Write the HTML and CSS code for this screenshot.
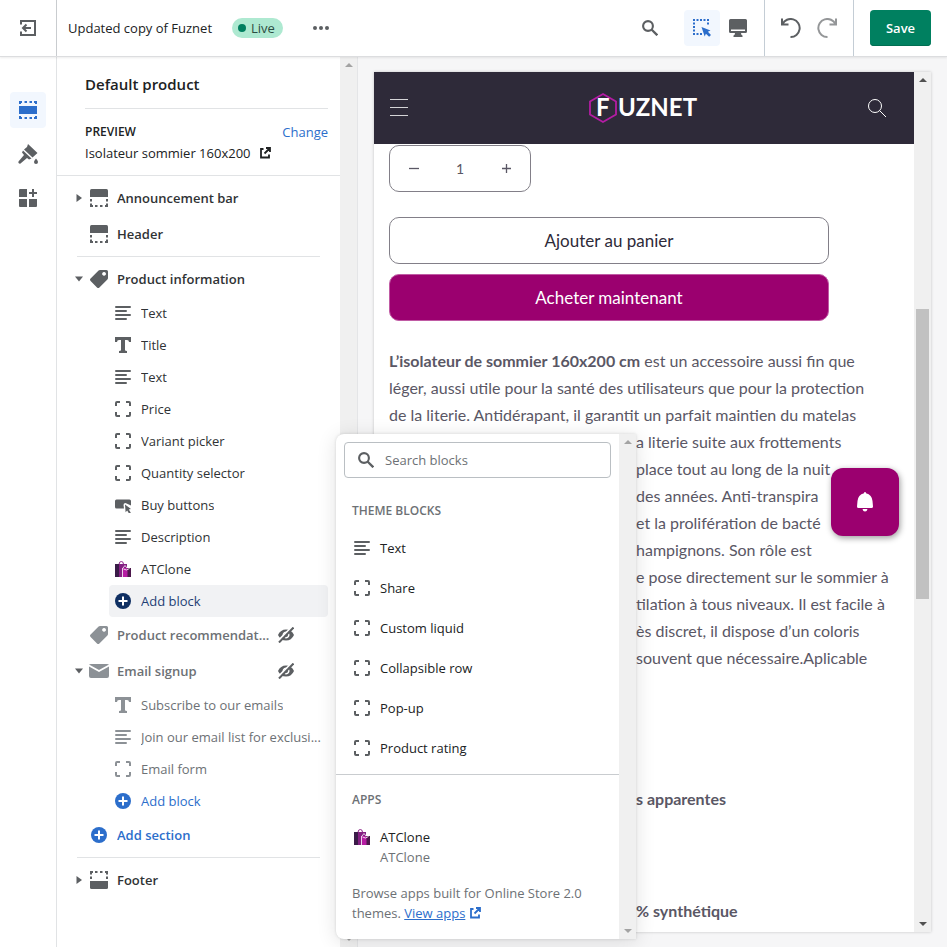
FILE: index.html
```html
<!DOCTYPE html>
<html lang="en">
<head>
<meta charset="utf-8">
<meta name="viewport" content="width=device-width, initial-scale=1">
<title>Theme editor</title>
<link rel="stylesheet" href="styles.css">
</head>
<body>
<svg class="sprite" aria-hidden="true">
  <symbol id="exit" viewBox="0 0 18 18"><path d="M2 5.500V2h14v14H2v-3.500M4 9h8M7.500 5.500 4 9l3.500 3.500" fill="none" stroke="currentColor" stroke-width="2"/></symbol>
  <symbol id="sections" viewBox="0 0 18 18"><path d="M0 5h18v8H0z" fill="currentColor"/><path d="M1 3V1h2M5.500 1h2.500M10.500 1H13M15 1h2v2M1 15v2h2M5.500 17h2.500M10.500 17H13M15 17h2v-2" fill="none" stroke="currentColor" stroke-width="2"/></symbol>
  <symbol id="brush" viewBox="0 0 20 20"><path d="m10 0 9.500 9-5 4.500L6 5.500 9 3zM5 6.500l8.500 8-2.500 1-2-1.500-6.500 5.500a1.500 1.500 0 0 1-2-2L6 11 4 8.500z" fill="currentColor"/><path d="M18 14.500s2 2.300 2 3.500a2 2 0 0 1-4 0c0-1.200 2-3.500 2-3.500z" fill="currentColor"/></symbol>
  <symbol id="apps" viewBox="0 0 18 18"><path d="M1 0h7v8H0V1q0-1 1-1zM0 10h8v8H1q-1 0-1-1zM10 10h8v7q0 1-1 1h-7zM13 0h2v3h3v2h-3v3h-2V5h-3V3h3z" fill="currentColor"/></symbol>
  <symbol id="search" viewBox="0 0 16 16"><circle cx="6" cy="6" r="4.900" fill="none" stroke="currentColor" stroke-width="2.100"/><path d="m9.500 9.500 5.800 5.800" stroke="currentColor" stroke-width="2.300"/></symbol>
  <symbol id="inspect" viewBox="0 0 18 18"><path d="M0 0h2v2H0zM3.500 0h2v2h-2zM7 0h2v2H7zM10.500 0h2v2h-2zM14 0h2v2h-2zM0 3.500h2v2H0zM0 7h2v2H0zM0 10.500h2v2H0zM0 14h2v2H0zM3.500 14h2v2h-2zM7 14h2v2H7zM14 3.500h2v2h-2z" fill="currentColor"/><path d="m8.500 8 9 3.500-2.600 1.200 3.100 3.200-1.900 1.900-3.200-3.100-1.200 2.800z" fill="currentColor"/></symbol>
  <symbol id="desktop" viewBox="0 0 18 18"><path d="M1.500 0h15Q18 0 18 1.500v11q0 1.500-1.500 1.500H12q0 2 1.500 2.500V18h-9v-1.500Q6 16 6 14H1.500Q0 14 0 12.500v-11Q0 0 1.500 0zM2 10.500V12h14v-1.500z" fill="currentColor" fill-rule="evenodd"/></symbol>
  <symbol id="undo" viewBox="0 0 20 20"><path d="M1.500 6.200A9 9 0 1 1 9.500 19M1 .500V6.500h6.500" fill="none" stroke="currentColor" stroke-width="2"/></symbol>
  <symbol id="top" viewBox="0 0 18 18"><path d="M1.500 0h15Q18 0 18 1.500V8H0V1.500Q0 0 1.500 0z" fill="currentColor"/><path d="M1 10v2.500M1 14.500V17h2M5 17h2.500M10 17h2.500M15 17h2v-2.500M17 12.500V10" fill="none" stroke="currentColor" stroke-width="2"/></symbol>
  <symbol id="tag" viewBox="0 0 18 18"><path d="M10 0h6.500Q18 0 18 1.500V8q0 .800-.600 1.400L9.400 17.400q-1.200 1.200-2.400 0L.600 11q-1.200-1.200 0-2.400L8.600.600Q9.200 0 10 0zM14 2a1.900 1.900 0 1 0 .1 0z" fill="currentColor" fill-rule="evenodd"/></symbol>
  <symbol id="text" viewBox="0 0 16 16"><path d="M1 2h14M1 6h10M1 10h14M1 14h10" stroke="currentColor" stroke-width="2" stroke-linecap="round"/></symbol>
  <symbol id="title" viewBox="0 0 16 16"><path d="M0 0h16v5h-2q0-2-2-2h-2v10q0 1 2 1v2H4v-2q2 0 2-1V3H4Q2 3 2 5H0z" fill="currentColor"/></symbol>
  <symbol id="block" viewBox="0 0 16 16"><path d="M1 5V2q0-1 1-1h3M11 1h3q1 0 1 1v3M15 11v3q0 1-1 1h-3M5 15H2q-1 0-1-1v-3" fill="none" stroke="currentColor" stroke-width="2"/></symbol>
  <symbol id="buy" viewBox="0 0 16 16"><path d="M1.500 2.500h13Q16 2.500 16 4v4.500L10.500 6Q8.500 6 8.500 8l.5 3.500H1.500Q0 11.500 0 10V4q0-1.500 1.500-1.500z" fill="currentColor"/><path d="m10 7.500 6 4.500-2.200.500 2 3.300-1.700.900-1.900-3.200-1.600 1.700z" fill="currentColor"/></symbol>
  <symbol id="bag" viewBox="0 0 16 16"><path d="M4 3.500Q4 .500 6.300.500T8.500 3.500" fill="none" stroke="#8d2589"/><path d="M0 3h7v13H0z" fill="#3a1c48"/><path d="M4 3h8v13H4z" fill="#842082"/><path d="M7.500 7H16v9H7.500z" fill="#b51ca2"/><path d="M12.500 7H16v9h-3.500z" fill="#4c184c"/><path d="M7.500 7v9M8 7l2-2.500L12 7l2.500-2L16 7M8.500 8l3 1 3-1.500" fill="none" stroke="#fff" stroke-width=".800"/></symbol>
  <symbol id="plus" viewBox="0 0 16 16"><circle cx="8" cy="8" r="8" fill="currentColor"/><path d="M8 3.500v9M3.500 8h9" stroke="#fff" stroke-width="2"/></symbol>
  <symbol id="hidden" viewBox="0 0 16 16"><path d="M0 8Q2.500 2.500 8 2.500t8 5.500q-2.500 5.500-8 5.500T0 8zM8 4.500a3.500 3.500 0 1 0 .1 0z" fill="currentColor" fill-rule="evenodd"/><circle cx="8" cy="8" r="2" fill="currentColor"/><path d="M-.5 14.500 14.500-.5" stroke="#fff" stroke-width="2"/><path d="m1 15.500 14.500-15" stroke="currentColor" stroke-width="2"/></symbol>
  <symbol id="mail" viewBox="0 0 20 14"><path d="M0 2.500 10 8l10-5.500V12q0 2-2 2H2q-2 0-2-2z" fill="currentColor"/><path d="M0 .500Q.500 0 2 0h16q1.500 0 2 .500L10 6z" fill="currentColor"/></symbol>
  <symbol id="external" viewBox="0 0 12 12"><path d="M4.500 2H2v8.500h8V7.500M7 1h4v4M11 1 5.500 6.500" fill="none" stroke="currentColor" stroke-width="1.800"/></symbol>
  <symbol id="right" viewBox="0 0 10 10"><path d="M2.500 1v8L8 5z" fill="currentColor"/></symbol>
  <symbol id="down" viewBox="0 0 10 10"><path d="M1 2.500h8L5 7.500z" fill="currentColor"/></symbol>
</svg>

<div class="app">
  <header class="topbar">
    <button class="exit" aria-label="Exit"><svg class="i18"><use href="#exit"/></svg></button>
    <div class="theme">
      <span>Updated copy of Fuznet</span>
      <span class="badge"><i></i>Live</span>
      <button class="more" aria-label="More actions"><i></i><i></i><i></i></button>
    </div>
    <div class="tools">
      <button class="tool" aria-label="Search"><svg class="i16"><use href="#search"/></svg></button>
      <button class="tool selected" aria-label="Inspector"><svg class="i18"><use href="#inspect"/></svg></button>
      <button class="tool desk" aria-label="Desktop view"><svg class="i18"><use href="#desktop"/></svg></button>
    </div>
    <div class="history">
      <button class="tool" aria-label="Undo"><svg class="i20"><use href="#undo"/></svg></button>
      <button class="tool redo" aria-label="Redo"><svg class="i20"><use href="#undo"/></svg></button>
    </div>
    <div class="saving"><button class="save">Save</button></div>
  </header>

  <div class="body">
    <nav class="rail">
      <button class="tool selected" aria-label="Sections"><svg class="i18"><use href="#sections"/></svg></button>
      <button class="tool" aria-label="Theme settings"><svg class="i20"><use href="#brush"/></svg></button>
      <button class="tool" aria-label="App embeds"><svg class="i18"><use href="#apps"/></svg></button>
    </nav>

    <aside class="sidebar">
      <div class="intro">
        <h1>Default product</h1>
        <div class="preview-head"><h2>PREVIEW</h2><a href="#change">Change</a></div>
        <p>Isolateur sommier 160x200 <svg class="i12"><use href="#external"/></svg></p>
      </div>
      <div class="tree">
        <button class="row"><svg class="caret"><use href="#right"/></svg><svg class="i18"><use href="#top"/></svg><span>Announcement bar</span></button>
        <button class="row"><i class="caret"></i><svg class="i18"><use href="#top"/></svg><span>Header</span></button>
        <hr>
        <button class="row"><svg class="caret"><use href="#down"/></svg><svg class="i18"><use href="#tag"/></svg><span>Product information</span></button>
        <button class="sub"><svg class="i16"><use href="#text"/></svg><span>Text</span></button>
        <button class="sub"><svg class="i16"><use href="#title"/></svg><span>Title</span></button>
        <button class="sub"><svg class="i16"><use href="#text"/></svg><span>Text</span></button>
        <button class="sub"><svg class="i16"><use href="#block"/></svg><span>Price</span></button>
        <button class="sub"><svg class="i16"><use href="#block"/></svg><span>Variant picker</span></button>
        <button class="sub"><svg class="i16"><use href="#block"/></svg><span>Quantity selector</span></button>
        <button class="sub"><svg class="i16"><use href="#buy"/></svg><span>Buy buttons</span></button>
        <button class="sub"><svg class="i16"><use href="#text"/></svg><span>Description</span></button>
        <button class="sub"><svg class="i16"><use href="#bag"/></svg><span>ATClone</span></button>
        <button class="sub add pressed"><svg class="i16"><use href="#plus"/></svg><span>Add block</span></button>
        <button class="row muted"><i class="caret"></i><svg class="i18"><use href="#tag"/></svg><span>Product recommendat...</span><svg class="i16 eye"><use href="#hidden"/></svg></button>
        <button class="row muted"><svg class="caret"><use href="#down"/></svg><svg class="mail"><use href="#mail"/></svg><span>Email signup</span><svg class="i16 eye"><use href="#hidden"/></svg></button>
        <button class="sub muted"><svg class="i16"><use href="#title"/></svg><span>Subscribe to our emails</span></button>
        <button class="sub muted"><svg class="i16"><use href="#text"/></svg><span>Join our email list for exclusi...</span></button>
        <button class="sub muted"><svg class="i16"><use href="#block"/></svg><span>Email form</span></button>
        <button class="sub add"><svg class="i16"><use href="#plus"/></svg><span>Add block</span></button>
        <button class="row add"><i class="caret"></i><svg class="i18 plus"><use href="#plus"/></svg><span>Add section</span></button>
        <hr>
        <button class="row"><svg class="caret"><use href="#right"/></svg><svg class="i18 flip"><use href="#top"/></svg><span>Footer</span></button>
      </div>
    </aside>
    <div class="track side-track"><i class="up"></i><i class="dn"></i></div>

    <main class="stage">
      <div class="page">
        <div class="shop">
          <div class="shop-head">
            <button class="menu" aria-label="Menu"><svg viewBox="0 0 18 18"><path d="M0 .500h18M0 8.500h18M0 16.500h18" stroke="#d5d4d7" fill="none"/></svg></button>
            <svg class="logo" viewBox="0 0 110 30" role="img" aria-label="Fuznet"><path d="m14 1 13 7.500v13L14 29 1 21.500v-13z" fill="none" stroke="#b41ca4" stroke-width="1.800"/><text x="7" y="23">F</text><text x="29" y="23">UZNET</text></svg>
            <button class="menu" aria-label="Search store"><svg viewBox="0 0 18 18" fill="none" stroke="#fff"><circle cx="7" cy="7" r="6.500"/><path d="m11.500 11.500 6.500 6.500"/></svg></button>
          </div>
          <div class="product">
            <div class="qty"><button aria-label="Decrease"><svg viewBox="0 0 10 10"><path d="M0 4.500h10" stroke="currentColor" stroke-width="1.300"/></svg></button><input type="text" value="1" aria-label="Quantity"><button aria-label="Increase"><svg viewBox="0 0 10 10"><path d="M0 4.500h9M4.500 0v9" stroke="currentColor" stroke-width="1.300"/></svg></button></div>
            <button class="cta">Ajouter au panier</button>
            <button class="cta buy">Acheter maintenant</button>
            <p class="desc"><b>L’isolateur de sommier 160x200 cm</b> est un accessoire aussi fin que<br>léger, aussi utile pour la santé des utilisateurs que pour la protection<br>de la literie. Antidérapant, il garantit un parfait maintien du matelas</p>
            <p class="desc rest">a literie suite aux frottements<br>place tout au long de la nuit<br>des années. Anti-transpira<br>et la prolifération de bacté<br>hampignons. Son rôle est<br>e pose directement sur le sommier à<br>tilation à tous niveaux. Il est facile à<br>ès discret, il dispose d’un coloris<br>souvent que nécessaire.Aplicable</p>
            <p class="desc rest spec"><b>s apparentes</b></p>
            <p class="desc rest spec"><b>% synthétique</b></p>
          </div>
          <button class="bell" aria-label="Notifications"><svg viewBox="0 0 16 20"><path d="M8 0q1 0 1 1.300Q15 3 15.500 9L16 14.500q0 1.500-1.500 1.500h-13Q0 16 0 14.500L.500 9Q1 3 7 1.300 7 0 8 0zM5.500 17h5q-.500 2.500-2.500 2.500T5.500 17z" fill="#fff"/></svg></button>
        </div>
        <div class="track page-track"><i class="up"></i><b class="thumb"></b><i class="dn"></i></div>
      </div>
    </main>
  </div>

  <section class="popover" aria-label="Add block">
    <div class="pop-body">
      <label class="field"><svg class="i16"><use href="#search"/></svg><input type="text" placeholder="Search blocks" aria-label="Search blocks"></label>
      <h3>THEME BLOCKS</h3>
      <button class="opt"><svg class="i16"><use href="#text"/></svg>Text</button>
      <button class="opt"><svg class="i16"><use href="#block"/></svg>Share</button>
      <button class="opt"><svg class="i16"><use href="#block"/></svg>Custom liquid</button>
      <button class="opt"><svg class="i16"><use href="#block"/></svg>Collapsible row</button>
      <button class="opt"><svg class="i16"><use href="#block"/></svg>Pop-up</button>
      <button class="opt"><svg class="i16"><use href="#block"/></svg>Product rating</button>
      <div class="apps">
        <h3>APPS</h3>
        <button class="opt app-opt"><svg class="i16"><use href="#bag"/></svg><span>ATClone<small>ATClone</small></span></button>
        <p>Browse apps built for Online Store 2.0<br>themes. <a href="#apps-store">View apps</a> <svg class="i12"><use href="#external"/></svg></p>
      </div>
    </div>
    <div class="track"><i class="up"></i><i class="dn"></i></div>
  </section>
</div>
</body>
</html>
```
FILE: styles.css
```css
* { box-sizing: border-box; }
body {
  margin: 0;
  font: 13px/20px "Open Sans", "Noto Sans", sans-serif;
  color: #202223;
  background: #fff;
}
button {
  font: inherit;
  color: inherit;
  background: none;
  border: 0;
  padding: 0;
  margin: 0;
  text-align: left;
}
h1, h2, h3, p { margin: 0; }
a { color: #2c6ecb; }
svg { display: block; flex: none; overflow: visible; }
.sprite { position: absolute; width: 0; height: 0; }
.i12 { width: 12px; height: 12px; }
.i16 { width: 16px; height: 16px; }
.i18 { width: 18px; height: 18px; }
.i20 { width: 20px; height: 20px; }

.app {
  position: relative;
  display: flex;
  flex-direction: column;
  height: 100vh;
  min-height: 900px;
  overflow: hidden;
}

/* Top bar */
.topbar {
  position: relative;
  z-index: 1;
  display: flex;
  flex: none;
  height: 57px;
  border-bottom: 1px solid #dcdddf;
  box-shadow: 0 1px 2px rgba(0, 0, 0, .08);
  background: #fff;
}
.exit {
  display: grid;
  place-items: center;
  width: 57px;
  border-right: 1px solid #c9cccf;
  color: #5c5f62;
}
.theme {
  display: flex;
  flex: 1;
  align-items: center;
  gap: 16px;
  padding-left: 11px;
}
.badge {
  display: flex;
  align-items: center;
  gap: 5px;
  margin-left: 4px;
  padding: 0 8px 0 6px;
  border-radius: 10px;
  background: #aee9d1;
  color: #2b4d42;
}
.badge i { width: 8px; height: 8px; border-radius: 50%; background: #007f5f; }
.more { display: flex; gap: 2px; padding: 8px 14px; }
.more i { width: 4px; height: 4px; border-radius: 50%; background: #5c5f62; }
.tools, .history, .saving { display: flex; align-items: center; }
.tools { padding-right: 8px; }
.tools .selected { margin-left: 16px; }
.history { width: 90px; justify-content: center; border: solid #c4cdd5; border-width: 0 1px; }
.redo { transform: scaleX(-1); opacity: .65; }
.saving { padding: 0 16px; }
.tool {
  display: grid;
  place-items: center;
  width: 36px;
  height: 36px;
  border-radius: 4px;
  color: #5c5f62;
}
.selected { background: #f2f7fe; color: #2c6ecb; }
.save {
  width: 61px;
  height: 36px;
  border-radius: 4px;
  background: #008060;
  box-shadow: inset 0 -1px #006e52;
  color: #fff;
  font-weight: 600;
  text-align: center;
}

/* Columns */
.body { display: flex; flex: 1; min-height: 0; }
.rail {
  display: flex;
  flex: none;
  flex-direction: column;
  align-items: center;
  gap: 8px;
  width: 57px;
  padding-top: 35px;
  border-right: 1px solid #e1e3e5;
}
.sidebar { flex: none; width: 283px; }
.intro { padding: 17px 12px 12px 28px; border-bottom: 1px solid #e1e3e5; }
.intro h1 {
  padding-bottom: 14px;
  border-bottom: 1px solid #e1e3e5;
  font-size: 15px;
  line-height: 20px;
  font-weight: 600;
}
.preview-head { display: flex; justify-content: space-between; padding: 13px 0 1px; }
.preview-head h2 { font-size: 12px; line-height: 20px; font-weight: 600; }
.preview-head a { text-decoration: none; }
.intro p { display: flex; align-items: center; gap: 8px; }
.tree { padding: 4px 12px 0 16px; color: #303335; }
.tree hr { height: 1px; margin: 4px 8px 4px 4px; border: 0; background: #e1e3e5; }
.row, .sub { display: flex; align-items: center; width: 100%; }
.row { height: 36px; font-weight: 600; }
.row span, .sub span { overflow: hidden; text-overflow: ellipsis; white-space: nowrap; }
.row span { width: 154px; margin: 0 7px 0 9px; }
.row svg, .sub svg, .field svg, .opt svg { color: #5c5f62; }
.caret { flex: none; width: 10px; height: 10px; margin: 0 6px 0 1px; }
.sub { height: 32px; width: auto; margin-left: 36px; padding-left: 6px; gap: 10px; border-radius: 4px; }
button.sub { width: calc(100% - 36px); }
.row.muted, .sub.muted { color: #6d7175; }
.muted svg { color: #8c9196; }
.muted .eye, .muted .caret { color: #5c5f62; }
.mail { width: 20px; height: 14px; margin: 0 -1px; }
.row.add, .sub.add, .row.add svg, .sub.add svg { color: #2c6ecb; }
.row .plus { height: 16px; }
.sub.pressed { background: #f1f2f4; color: #1f3f75; }
.sub.pressed svg { color: #0f2f62; }
.flip { transform: scaleY(-1); }

/* Scroll tracks */
.track {
  display: flex;
  flex: none;
  flex-direction: column;
  justify-content: space-between;
  align-items: center;
  width: 17px;
  padding: 6px 0;
  background: #f0f0f0;
  color: #a3a3a3;
}
.up, .dn { border: 4px solid transparent; }
.up { border-top: 0; border-bottom-color: currentColor; }
.dn { border-bottom: 0; border-top-color: currentColor; }

/* Shop preview */
.stage { display: flex; flex: 1; min-width: 0; padding: 15px 16px; background: #f6f6f7; border-left: 1px solid #e4e5e7; }
.page { display: flex; flex: 1; min-width: 0; background: #fff; box-shadow: 0 0 3px rgba(0, 0, 0, .2); }
.page-track { color: #505050; }
.thumb { width: 13px; height: 290px; margin-bottom: 96px; background: #c1c1c1; }
.shop {
  position: relative;
  flex: 1;
  min-width: 0;
  overflow: hidden;
  font-family: Lato, sans-serif;
  color: #5a5765;
}
.shop-head {
  display: grid;
  grid-template-columns: 1fr auto 1fr;
  align-items: center;
  height: 72px;
  padding: 0 16px;
  background: #2e2a39;
}
.menu svg { width: 18px; height: 18px; }
.menu:last-child { justify-self: end; margin-right: 12px; }
.logo { width: 110px; height: 30px; }
.logo text { font: bold 24px Lato, sans-serif; fill: #fff; }
.product { padding: 1px 15px; }
.qty {
  display: flex;
  width: 142px;
  height: 47px;
  border: 1px solid #827f88;
  border-radius: 10px;
}
.qty button { display: grid; place-items: center; width: 47px; }
.qty svg { width: 10px; height: 10px; }
.qty input {
  flex: 1;
  width: 0;
  border: 0;
  background: none;
  font: 14px Lato, sans-serif;
  color: inherit;
  text-align: center;
}
.cta {
  display: block;
  width: 440px;
  max-width: 100%;
  height: 47px;
  margin-top: 25px;
  border: 1px solid #827f88;
  border-radius: 10px;
  font-size: 17px;
  color: #2e2a39;
  text-align: center;
}
.buy.cta { margin-top: 10px; background: #9b006f; border-color: #c05ba4; color: #fff; }
.desc { padding-top: 26px; font-size: 16px; line-height: 27px; white-space: nowrap; }
.rest { padding: 0 0 0 247px; }
.spec { margin-top: 114px; }
.spec + .spec { margin-top: 85px; }
.bell {
  position: absolute;
  right: 15px;
  top: 396px;
  display: grid;
  place-items: center;
  width: 68px;
  height: 68px;
  border-radius: 12px;
  background: #9b006f;
  box-shadow: 1px 2px 6px rgba(0, 0, 0, .4);
}
.bell svg { width: 16px; height: 20px; }

/* Block picker */
.popover {
  position: absolute;
  z-index: 2;
  left: 336px;
  top: 434px;
  bottom: 8px;
  display: flex;
  width: 300px;
  border-radius: 8px 0 0 8px;
  background: #fff;
  box-shadow: 0 0 3px rgba(23, 24, 24, .15), 0 3px 20px rgba(23, 24, 24, .12);
}
.pop-body { flex: 1; padding-top: 8px; overflow: hidden; }
.field {
  display: flex;
  align-items: center;
  gap: 11px;
  height: 36px;
  margin: 0 8px 16px;
  padding: 0 13px;
  border: 1px solid #babfc3;
  border-radius: 4px;
}
.field input { flex: 1; min-width: 0; border: 0; padding: 0; outline: 0; background: none; font: inherit; }
.field input::placeholder { color: #6d7175; opacity: 1; }
.popover h3 { padding: 7px 16px; font-size: 12px; line-height: 20px; font-weight: 600; color: #6d7175; }
.opt { display: flex; align-items: center; gap: 10px; width: 100%; height: 40px; padding-left: 18px; }
.apps { margin-top: 6px; padding-top: 8px; border-top: 1px solid #c9cccf; color: #6d7175; }
.app-opt { align-items: flex-start; height: 66px; padding-top: 10px; color: #202223; }
.app-opt svg { margin-top: 2px; }
.app-opt small { display: block; font-size: 13px; color: #6d7175; }
.apps p { padding: 0 16px; }
.apps p svg { display: inline-block; vertical-align: -1px; color: #2c6ecb; }
```
